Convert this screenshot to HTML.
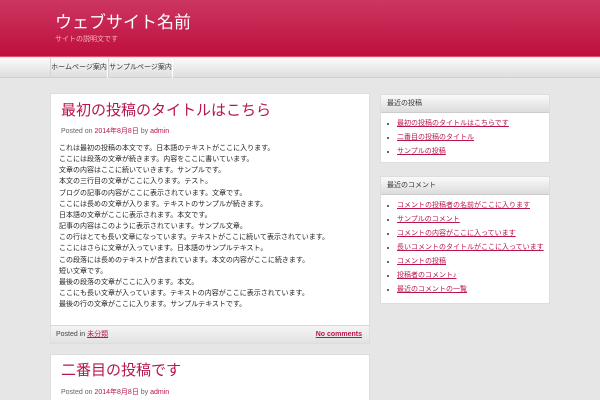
<!DOCTYPE html>
<html><head><meta charset="utf-8"><style>
*{margin:0;padding:0;box-sizing:border-box}
html,body{width:600px;height:400px;overflow:hidden}
body{background:#e6e6e6;font-family:"Liberation Sans","Noto Sans CJK JP",sans-serif;position:relative}
.hd{position:absolute;left:0;top:0;width:600px;height:57px;background:linear-gradient(#cc3660,#bf0f3e);border-bottom:1px solid #e0506f}
.hd h1{position:absolute;left:55px;top:13px;font-size:17px;line-height:20px;color:#fff;font-weight:normal;white-space:nowrap}
.hd p{position:absolute;left:55px;top:34px;font-size:7px;color:#f6b5c6}
.nav{position:absolute;left:0;top:58px;width:600px;height:20px;background:linear-gradient(#fafafa,#dedede);border-bottom:1px solid #d0d0d0}
.nav span{position:absolute;top:0;height:20px;line-height:20px;font-size:7px;color:#333;text-align:center;border-left:1px solid #d4d4d4;border-right:1px solid #fff;white-space:nowrap}
.box{position:absolute;background:#fff;border:1px solid #ddd}
.t{position:absolute;left:10px;font-size:15px;color:#b8164a;line-height:20px;white-space:nowrap}
.meta{position:absolute;left:10px;font-size:7px;color:#666}
.meta a{color:#b8164a}
.body{position:absolute;left:8px;top:49px;font-size:7px;line-height:11.15px;color:#222;white-space:nowrap}
.foot{position:absolute;left:0;bottom:0;width:100%;height:18px;background:linear-gradient(#f4f4f4,#e2e2e2);border-top:1px solid #d8d8d8;font-size:7px;line-height:18px;color:#444;padding:0 5px}
.foot a{color:#b8164a}
.wt{height:18px;background:linear-gradient(#fafafa,#dcdcdc);border-bottom:1px solid #ccc;font-size:7px;line-height:18px;padding-left:6px;color:#333}
ul{padding:4px 0 0 16px;font-size:7px;color:#b8164a;line-height:14px}
li{text-decoration:underline;color:#b8164a;white-space:nowrap}
li::marker{color:#333}
</style></head><body>
<div class="hd"><h1>ウェブサイト名前</h1><p>サイトの説明文です</p></div>
<div class="nav"><span style="left:50px;width:58px">ホームページ案内</span><span style="left:108px;width:65px">サンプルページ案内</span></div>
<div class="box" style="left:50px;top:93px;width:320px;height:251px">
<div class="t" style="top:7px">最初の投稿のタイトルはこちら</div>
<div class="meta" style="top:32px">Posted on <a>2014年8月8日</a> by <a>admin</a></div>
<div class="body">
これは最初の投稿の本文です。日本語のテキストがここに入ります。<br>
ここには段落の文章が続きます。内容をここに書いています。<br>
文章の内容はここに続いていきます。サンプルです。<br>
本文の三行目の文章がここに入ります。テスト。<br>
ブログの記事の内容がここに表示されています。文章です。<br>
ここには長めの文章が入ります。テキストのサンプルが続きます。<br>
日本語の文章がここに表示されます。本文です。<br>
記事の内容はこのように表示されています。サンプル文章。<br>
この行はとても長い文章になっています。テキストがここに続いて表示されています。<br>
ここにはさらに文章が入っています。日本語のサンプルテキスト。<br>
この段落には長めのテキストが含まれています。本文の内容がここに続きます。<br>
短い文章です。<br>
最後の段落の文章がここに入ります。本文。<br>
ここにも長い文章が入っています。テキストの内容がここに表示されています。<br>
最後の行の文章がここに入ります。サンプルテキストです。
</div>
<div class="foot">Posted in <a style="text-decoration:underline">未分類</a><a style="position:absolute;right:7px;font-weight:bold;text-decoration:underline">No comments</a></div>
</div>
<div class="box" style="left:50px;top:354px;width:320px;height:60px">
<div class="t" style="top:6px">二番目の投稿です</div>
<div class="meta" style="top:32px">Posted on <a>2014年8月8日</a> by <a>admin</a></div>
</div>
<div class="box" style="left:380px;top:94px;width:170px;height:69px">
<div class="wt">最近の投稿</div>
<ul><li>最初の投稿のタイトルはこちらです</li><li>二番目の投稿のタイトル</li><li>サンプルの投稿</li></ul>
</div>
<div class="box" style="left:380px;top:176px;width:170px;height:128px">
<div class="wt">最近のコメント</div>
<ul><li>コメントの投稿者の名前がここに入ります</li><li>サンプルのコメント</li><li>コメントの内容がここに入っています</li><li>長いコメントのタイトルがここに入っています</li><li>コメントの投稿</li><li>投稿者のコメント♪</li><li>最近のコメントの一覧</li></ul>
</div>
</body></html>
